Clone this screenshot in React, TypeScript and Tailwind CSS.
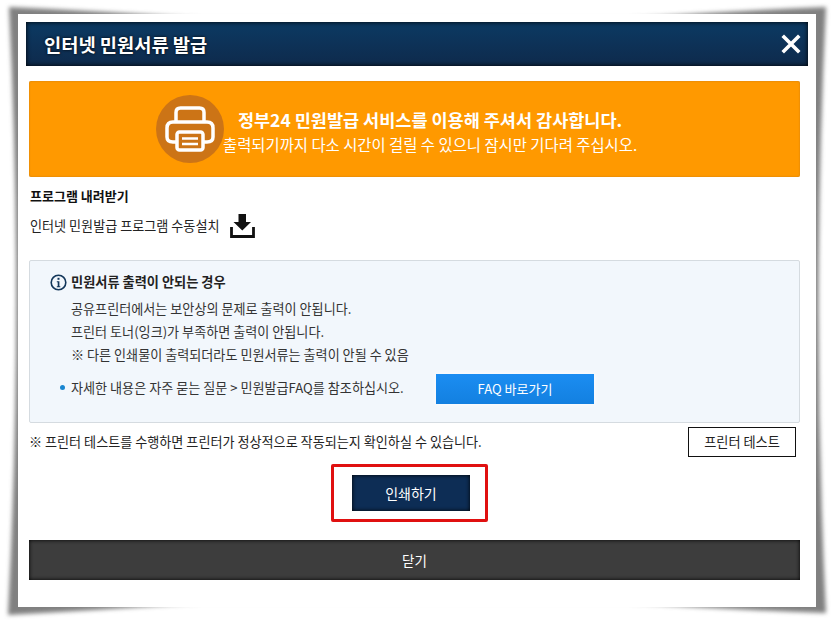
import React from "react";

const font = { fontFamily: '"Noto Sans CJK KR", "Noto Sans", sans-serif' };

function PageShadow() {
  return (
    <svg className="absolute left-0 top-0" width="833" height="622" viewBox="0 0 833 622" aria-hidden="true">
      <defs>
        <filter id="soft" x="-5%" y="-5%" width="110%" height="110%">
          <feGaussianBlur stdDeviation="2" />
        </filter>
      </defs>
      <path
        d="M9 7Q100 11 200 18H630Q730 11 826 7Q811 310 826 613Q730 610 630 603H200Q100 610 8 615Q24 310 9 7Z"
        fill="#808080"
        filter="url(#soft)"
      />
    </svg>
  );
}

function PrinterIcon() {
  return (
    <svg width="50" height="46" viewBox="0 0 50 46" fill="none" stroke="white" strokeWidth="3.5" strokeLinejoin="round">
      <path d="M11 16V6.500Q11 2 15.500 2H34.500Q39 2 39 6.500V16" />
      <path d="M11 36H8Q2 36 2 31V22Q2 16 8 16H42Q48 16 48 22V31Q48 36 42 36H39" />
      <rect x="12" y="26" width="26" height="18" rx="2.500" />
      <path d="M17 32.500H33M17 38H33" strokeWidth="2.500" />
    </svg>
  );
}

function DownloadIcon() {
  return (
    <svg width="25" height="24" viewBox="0 0 25 24" className="text-[#111111]">
      <path d="M8.500 0H16V8H21L12.300 16.500L3.500 8H8.500Z" fill="currentColor" />
      <path d="M1.500 13V22.500H23.500V13" fill="none" stroke="currentColor" strokeWidth="2.800" />
    </svg>
  );
}

function InfoIcon() {
  return (
    <svg width="17" height="17" viewBox="0 0 17 17" fill="none">
      <circle cx="8.500" cy="8.500" r="7.300" stroke="#12365a" strokeWidth="1.600" />
      <rect x="7.500" y="3.800" width="2" height="2" fill="#12365a" />
      <path d="M6.800 7.200H9.400V12.200H10.300V13.300H6.800V12.200H7.700V8.300H6.800Z" fill="#12365a" />
    </svg>
  );
}

export default function App() {
  return (
    <div className="relative h-[622px] w-[833px] overflow-hidden bg-white pl-[18px] pt-[14px]" style={font}>
      <PageShadow />
      <div className="relative flex h-[593px] w-[798px] flex-col bg-white">
        <header className="relative ml-[8px] mt-[8px] flex h-[44px] w-[782px] items-center justify-between bg-gradient-to-b from-[#0b3a63] to-[#0e2a4c] pl-[18px] pr-[7px] shadow-[inset_0_0_5px_#000000]">
          <h1 className="text-[18.700px] font-bold text-white [text-shadow:0_0_3px_#000000]">인터넷 민원서류 발급</h1>
          <svg width="20" height="20" viewBox="0 0 20 20" stroke="white" strokeWidth="3.600" strokeLinecap="square" aria-label="닫기">
            <path d="M3 3L17 17M17 3L3 17" />
          </svg>
        </header>

        <div className="relative flex flex-1 flex-col pl-[11px] pr-[16px]">
          <section className="mt-[15px] flex h-[96px] items-center rounded-[2px] bg-[#ff9900] pl-[127px] shadow-[inset_0_0_2px_#c47a10]">
            <div className="flex h-[68px] w-[68px] shrink-0 items-center justify-center rounded-full bg-[#cc7416]">
              <PrinterIcon />
            </div>
            <div className="ml-[-1px] mt-[4px] flex flex-col items-center text-white">
              <p className="text-[17.500px] leading-[25px] font-bold">정부24 민원발급 서비스를 이용해 주셔서 감사합니다.</p>
              <p className="text-[15.400px] leading-[24px]">출력되기까지 다소 시간이 걸릴 수 있으니 잠시만 기다려 주십시오.</p>
            </div>
          </section>

          <h2 className="mt-[9px] pl-[1px] text-[13px] leading-[20px] font-bold text-[#111111]">프로그램 내려받기</h2>
          <div className="mt-[7px] flex h-[26px] items-center gap-[10px] pl-[1px] text-[13.100px] text-[#222222]">
            <span>인터넷 민원발급 프로그램 수동설치</span>
            <DownloadIcon />
          </div>

          <section className="mt-[21px] h-[163px] rounded-[2px] border border-[#d5dbe0] bg-[#f2f7fc] pl-[20px] pt-[11px] text-[13.100px] text-[#333333]">
            <div className="flex h-[20px] items-center gap-[4px]">
              <InfoIcon />
              <h3 className="text-[13.200px] font-bold text-[#222222]">민원서류 출력이 안되는 경우</h3>
            </div>
            <ul className="mt-[5px] pl-[21px] leading-[23px]">
              <li>공유프린터에서는 보안상의 문제로 출력이 안됩니다.</li>
              <li>프린터 토너(잉크)가 부족하면 출력이 안됩니다.</li>
              <li>※ 다른 인쇄물이 출력되더라도 민원서류는 출력이 안될 수 있음</li>
            </ul>
            <div className="mt-[8px] flex h-[30px] items-center">
              <span className="mb-[3px] ml-[10px] h-[5px] w-[5px] rounded-full bg-[#1a86d0]" />
              <span className="mb-[3px] ml-[6px] w-[365px] whitespace-nowrap">자세한 내용은 자주 묻는 질문 &gt; 민원발급FAQ를 참조하십시오.</span>
              <button className="h-[30px] w-[158px] bg-gradient-to-b from-[#1b8df2] to-[#1380e0] text-[13px] text-white shadow-[0_0_6px_#ffffff]">FAQ 바로가기</button>
            </div>
          </section>

          <div className="mt-[4px] flex h-[30px] items-center justify-between pr-[4px]">
            <p className="text-[13.100px] text-[#222222]">※ 프린터 테스트를 수행하면 프린터가 정상적으로 작동되는지 확인하실 수 있습니다.</p>
            <button className="h-[30px] w-[108px] border border-[#111111] bg-white text-[13.200px] text-[#222222]">프린터 테스트</button>
          </div>

          <div className="mt-[7px] flex pl-[302px]">
            <div className="flex h-[58px] w-[157px] items-center rounded-[2px] border-[3px] border-[#e01010] pl-[18px]">
              <button className="h-[36px] w-[118px] bg-[#0d2d55] text-[14px] text-white shadow-[inset_0_0_4px_#000000]">인쇄하기</button>
            </div>
          </div>

          <button className="mt-[18px] h-[40px] w-full bg-[#3d3d3d] text-[13.500px] text-white shadow-[inset_0_0_4px_#000000]">닫기</button>
        </div>
      </div>
    </div>
  );
}
